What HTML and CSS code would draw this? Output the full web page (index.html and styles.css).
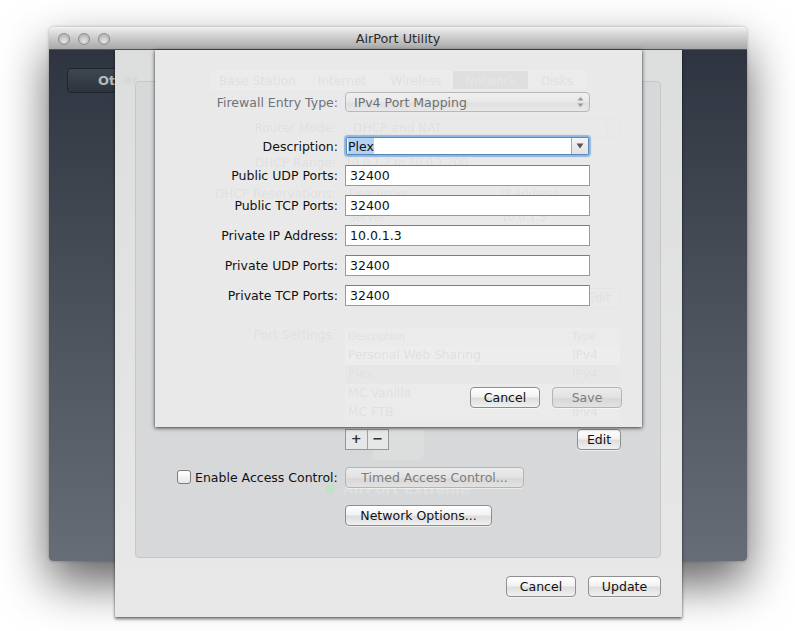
FILE: index.html
```html
<!DOCTYPE html>
<html lang="en">
<head>
<meta charset="utf-8">
<title>AirPort Utility</title>
<link rel="stylesheet" href="styles.css">
</head>
<body>
<div class="desktop">
  <section class="window">
    <header class="titlebar">
      <div class="lights"><i class="light"></i><i class="light"></i><i class="light"></i></div>
      <div class="title">AirPort Utility</div>
    </header>
    <div class="window-body">
      <div class="other-btn">Oth</div>
    </div>
  </section>

  <section class="sheet-outer">
    <span class="ghost-other">er</span>
    <div class="panel">
      <div class="ghost-device">
        <div class="ghost-icon"></div>
        <div class="ghost-name"><i class="ghost-dot"></i>AirPort Extreme</div>
      </div>
      <div class="table-tools">
        <div class="segment"><span class="seg">+</span><span class="seg">−</span></div>
        <div class="btn edit-btn">Edit</div>
      </div>
      <div class="access-row">
        <label class="access-label"><i class="checkbox"></i>Enable Access Control:</label>
        <div class="btn btn-disabled timed-btn">Timed Access Control...</div>
      </div>
      <div class="options-row"><div class="btn options-btn">Network Options...</div></div>
    </div>
    <footer class="outer-actions">
      <div class="btn act-cancel">Cancel</div>
      <div class="btn act-update">Update</div>
    </footer>
  </section>

  <section class="sheet-inner">
    <div class="ghost">
      <div class="ghost-tabs">
        <span class="gtab t1">Base Station</span><span class="gtab t2">Internet</span><span class="gtab t3">Wireless</span><span class="gtab t4">Network</span><span class="gtab t5">Disks</span>
      </div>
      <div class="grow g-router"><span class="glabel">Router Mode:</span><span class="gpopup">DHCP and NAT<i class="gpopup-arrows">⋮</i></span></div>
      <div class="grow g-range"><span class="glabel">DHCP Range:</span><span class="gvalue">10.0.1.2 to 10.0.1.200</span></div>
      <div class="grow g-res"><span class="glabel">DHCP Reservations:</span><span class="gcol">Description</span><span class="gcol2">IP Address</span></div>
      <div class="grow g-res2"><span class="glabel"></span><span class="gcol">Server</span><span class="gcol2">10.0.1.3</span></div>
      <div class="grow g-edit"><span class="gedit">Edit</span></div>
      <div class="grow g-port"><span class="glabel">Port Settings:</span>
        <div class="gtable">
          <div class="gtr ghead"><span>Description</span><span class="gtype">Type</span></div>
          <div class="gtr"><span>Personal Web Sharing</span><span class="gtype">IPv4</span></div>
          <div class="gtr gstripe"><span>Plex</span><span class="gtype">IPv4</span></div>
          <div class="gtr"><span>MC Vanilla</span><span class="gtype"></span></div>
          <div class="gtr"><span>MC FTB</span><span class="gtype">IPv4</span></div>
        </div>
      </div>
    </div>
    <div class="form">
      <div class="row row-type">
        <span class="label label-dim">Firewall Entry Type:</span>
        <div class="popup">IPv4 Port Mapping
          <svg class="updown" width="7" height="12" viewBox="0 0 7 12"><path d="M3.5 1 L6.5 4.6 H0.5 Z M3.5 11 L0.5 7.4 H6.5 Z" fill="#999"/></svg>
        </div>
      </div>
      <div class="row row-desc">
        <span class="label">Description:</span>
        <div class="combo">
          <div class="combo-text"><span class="selection">Plex</span></div>
          <div class="combo-btn"><svg width="8" height="6" viewBox="0 0 8 6"><path d="M0.5 0.5 H7.5 L4 5.5 Z" fill="#555"/></svg></div>
        </div>
      </div>
      <div class="row"><span class="label">Public UDP Ports:</span><div class="field">32400</div></div>
      <div class="row"><span class="label">Public TCP Ports:</span><div class="field">32400</div></div>
      <div class="row"><span class="label">Private IP Address:</span><div class="field">10.0.1.3</div></div>
      <div class="row"><span class="label">Private UDP Ports:</span><div class="field">32400</div></div>
      <div class="row"><span class="label">Private TCP Ports:</span><div class="field">32400</div></div>
    </div>
    <footer class="inner-actions">
      <div class="btn in-cancel">Cancel</div>
      <div class="btn btn-disabled in-save">Save</div>
    </footer>
  </section>
</div>
</body>
</html>
```
FILE: styles.css
```css
html, body { margin: 0; padding: 0; background: #fff; }
body { font-family: "DejaVu Sans", "Liberation Sans", sans-serif; font-size: 12.5px; color: #111; }
.desktop { position: relative; width: 795px; height: 631px; overflow: hidden; }

/* main window */
.window {
  position: absolute; left: 49px; top: 27px; width: 698px; height: 534px;
  display: flex; flex-direction: column;
  border-radius: 5px 5px 4px 4px;
  box-shadow: 0 22px 48px rgba(0,0,0,.62), 0 0 3px rgba(0,0,0,.3);
}
.titlebar {
  height: 21px; flex: none; position: relative;
  background: linear-gradient(#ececec, #d6d6d6 30%, #a8a8a8);
  border-top: 1px solid #f2f2f2;
  border-bottom: 1px solid #555;
  border-radius: 5px 5px 0 0;
}
.lights { display: flex; gap: 8px; padding: 5px 0 0 9px; }
.light {
  width: 10px; height: 10px; border-radius: 50%;
  background: radial-gradient(circle at 50% 70%, #e4e4e4, #b8b8b8 70%);
  border: 1px solid #8c8c8c; display: block;
}
.title { position: absolute; left: 0; right: 0; top: 3px; text-align: center; color: #2a2a2a; font-size: 12.8px; }
.window-body {
  flex: 1; padding: 18px 0 0 18px;
  background: linear-gradient(#2e3540, #676d76);
  border-radius: 0 0 4px 4px;
}
.other-btn {
  width: 70px; height: 23px; line-height: 23px; padding-left: 30px;
  border: 1px solid #1f252d; border-radius: 4px;
  background: linear-gradient(#3f4751, #2c333d);
  color: #b5b9bd; font-weight: bold; font-size: 13px;
}

/* outer sheet */
.sheet-outer {
  position: absolute; left: 115px; top: 50px; width: 567px; height: 567px;
  box-sizing: border-box; padding: 31px 21px 0 20px;
  background: linear-gradient(#dcdddd, #e8e8e8);
  box-shadow: 0 2px 3px rgba(0,0,0,.55), 0 0 1px rgba(0,0,0,.35);
}
.ghost-other { position: absolute; left: 8px; top: 22px; font-size: 13px; font-weight: bold; color: #d5d6d7; filter: blur(.5px); }
.panel {
  position: relative; height: 477px; box-sizing: border-box;
  padding: 347px 0 0 209px;
  background: #d7d8d9; border: 1px solid #c6c7c7; border-radius: 4px;
}
.ghost-device { position: absolute; left: 186px; top: 348px; width: 220px; filter: blur(.4px); }
.ghost-icon { width: 51px; height: 30px; margin-left: 51px; background: #dcdddd; border-radius: 0 0 6px 6px; }
.ghost-name { margin-top: 21px; margin-left: 3px; color: #dee0e0; font-weight: bold; font-size: 14px; display: flex; align-items: center; gap: 8px; }
.ghost-dot { width: 10px; height: 10px; border-radius: 50%; background: #c2e2c8; display: block; }
.table-tools { position: relative; display: flex; justify-content: space-between; width: 276px; }
.segment { display: flex; height: 19px; width: 42px; border: 1px solid #969696; background: #e6e7e7; }
.seg { flex: 1; text-align: center; line-height: 18px; font-weight: bold; font-size: 13px; color: #333; }
.seg + .seg { border-left: 1px solid #a0a0a0; }
.btn {
  box-sizing: border-box; height: 21px; line-height: 20px; text-align: center;
  border: 1px solid #8e8e8e; border-radius: 4px;
  background: linear-gradient(#fff, #f2f2f2 45%, #dedede 55%, #f0f0f0);
  color: #111; box-shadow: 0 1px 0 rgba(255,255,255,.5);
}
.btn-disabled { color: #7c7c7c; border-color: #b4b4b4; background: linear-gradient(#ececec, #e2e2e2 50%, #d8d8d8 55%, #e2e2e2); }
.edit-btn { width: 44px; }
.access-row { position: relative; display: flex; align-items: center; margin: 17px 0 0 -168px; }
.access-label { width: 168px; display: flex; align-items: center; white-space: nowrap; line-height: 18px; }
.checkbox {
  width: 12px; height: 12px; display: block; flex: none; margin-right: 4px; margin-top: -1px;
  border: 1px solid #7d7d7d; border-radius: 3px; background: linear-gradient(#fff, #e8e8e8);
}
.timed-btn { width: 179px; }
.options-row { position: relative; margin-top: 17px; }
.options-btn { width: 147px; }
.outer-actions { display: flex; justify-content: flex-end; gap: 12px; margin-top: 18px; }
.act-cancel { width: 70px; }
.act-update { width: 73px; }

/* inner sheet */
.sheet-inner {
  position: absolute; left: 155px; top: 50px; width: 487px; height: 377px;
  background: #e9e9e9;
  box-shadow: 0 1px 4px rgba(0,0,0,.7), 0 0 1px rgba(0,0,0,.45);
}
.ghost { position: absolute; inset: 0; color: #e0e0e0; font-size: 12.2px; overflow: hidden; filter: blur(.5px); }
.ghost-tabs { position: absolute; left: 55px; top: 20px; height: 20px; display: flex; }
.gtab { height: 20px; line-height: 20px; text-align: center; border: 1px solid #ececec; border-left: 0; box-sizing: border-box; background: #ebebeb; }
.t1 { width: 95px; border-left: 1px solid #ececec; border-radius: 4px 0 0 4px; }
.t2 { width: 75px; }
.t3 { width: 73px; }
.t4 { width: 76px; background: #dfdfdf; color: #e6e6e6; }
.t5 { width: 57px; border-radius: 0 4px 4px 0; }
.grow { position: absolute; left: 0; display: flex; white-space: nowrap; }
.glabel { width: 181px; text-align: right; margin-right: 9px; }
.g-router { top: 68px; align-items: center; }
.gpopup { position: relative; width: 275px; height: 20px; line-height: 19px; box-sizing: border-box; padding-left: 7px; border: 1px solid #e6e6e6; border-radius: 4px; }
.gpopup-arrows { position: absolute; right: 6px; top: 0; font-style: normal; }
.g-range { top: 106px; }
.gvalue { font-size: 11px; }
.g-res { top: 137px; }
.gcol { width: 152px; margin-left: 4px; font-size: 11px; }
.gcol2 { font-size: 11px; }
.g-res2 { top: 161px; }
.g-edit { top: 238px; left: 423px; }
.gedit { width: 42px; height: 20px; line-height: 18px; text-align: center; box-sizing: border-box; border: 1px solid #e4e4e4; border-radius: 4px; }
.g-port { top: 278px; }
.gtable { width: 275px; background: #ebebeb; }
.gtr { display: flex; justify-content: space-between; height: 19px; line-height: 19px; padding: 0 0 0 3px; }
.gtr:nth-child(2) { background: #ededed; }
.ghead { height: 18px; font-size: 10px; line-height: 18px; }
.gstripe { background: #e7e7e7; }
.gtype { width: 48px; }

.form { position: relative; display: flex; flex-direction: column; padding-top: 42px; }
.row { display: flex; align-items: center; height: 21px; margin-bottom: 9px; }
.label { width: 183px; text-align: right; margin-right: 7px; white-space: nowrap; flex: none; color: #111; }
.label-dim { color: #70727a; }
.row-type { height: 20px; margin-bottom: 24px; }
.row-desc { height: 20px; margin-bottom: 9px; }
.popup {
  position: relative; box-sizing: border-box; width: 245px; height: 20px; line-height: 19px;
  padding-left: 8px; color: #6f6f6f;
  border: 1px solid #b8b8b8; border-radius: 4px;
  background: linear-gradient(#f0f0f0, #e8e8e8 50%, #dfdfdf 55%, #e8e8e8);
}
.updown { position: absolute; right: 5px; top: 3px; }
.field {
  box-sizing: border-box; width: 245px; height: 21px; line-height: 20px; padding-left: 4px;
  background: #fff; border: 1px solid #9a9a9a; border-top-color: #7d7d7d; color: #111;
}
.combo {
  box-sizing: border-box; width: 243px; height: 18px; margin-left: 1px; display: flex; background: #fff;
  border: 1px solid #5b86b8; border-radius: 2px;
  box-shadow: 0 0 1px 2px #8eb7e0;
}
.combo-text { flex: 1; padding-left: 1px; line-height: 16px; }
.selection { display: inline-block; background: #b4d2f4; height: 16px; line-height: 17px; vertical-align: top; }
.combo-btn {
  width: 16px; display: flex; align-items: center; justify-content: center;
  border-left: 1px solid #a9a9a9; background: linear-gradient(#f4f4f4, #e2e2e2);
}
.inner-actions { position: absolute; right: 20px; top: 337px; display: flex; gap: 12px; }
.in-cancel, .in-save { width: 70px; }
```
